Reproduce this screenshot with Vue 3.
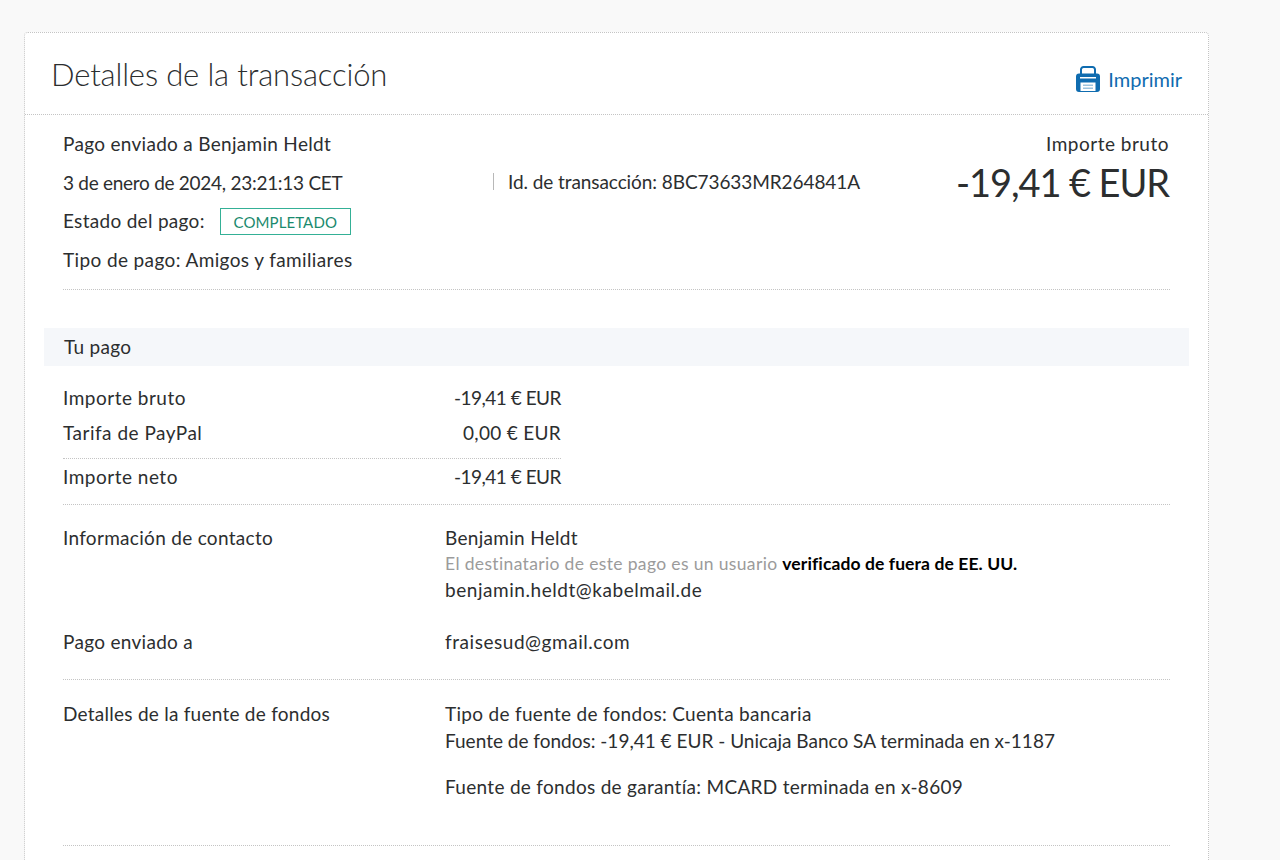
<template>
  <div class="page">
    <section class="card">
      <header class="card-head">
        <h1>Detalles de la transacción</h1>
        <a class="print-link">
          <svg width="24" height="26" viewBox="0 0 24 26" aria-hidden="true">
            <path d="M5 10V3.500A2.500 2.500 0 0 1 7.500 1h9A2.500 2.500 0 0 1 19 3.500V10" fill="none" stroke="#0f6cb0" stroke-width="2"/>
            <path d="M3 7.500h18a3 3 0 0 1 3 3V23a3 3 0 0 1-3 3H3a3 3 0 0 1-3-3V10.500a3 3 0 0 1 3-3z" fill="#0f6cb0"/>
            <rect x="4" y="11" width="16" height="1.500" fill="#fff"/>
            <rect x="4.500" y="16.500" width="15" height="8.500" fill="#fff"/>
            <rect x="7" y="18.500" width="10" height="1.500" fill="#9cc3de"/>
            <rect x="7" y="21.500" width="10" height="1.500" fill="#9cc3de"/>
          </svg>
          <span>Imprimir</span>
        </a>
      </header>

      <div class="card-body">
        <div class="summary">
          <div class="summary-left">
            <p>Pago enviado a Benjamin Heldt</p>
            <p class="digits">3 de enero de 2024, 23:21:13 CET</p>
            <p class="status-line">Estado del pago: <span class="badge">COMPLETADO</span></p>
            <p class="type-line">Tipo de pago: Amigos y familiares</p>
          </div>
          <div class="summary-id"><span>Id. de transacción: 8BC73633MR264841A</span></div>
          <div class="summary-right">
            <p class="wide">Importe bruto</p>
            <p class="big-amount">-19,41 € EUR</p>
          </div>
        </div>

        <div class="band">Tu pago</div>

        <div class="amounts">
          <div v-for="row in amountRows" :key="row.label" :class="['amount-row', { 'amount-total': row.total }]">
            <span class="wide">{{ row.label }}</span>
            <span :class="row.zero ? 'zero' : 'value'">{{ row.value }}</span>
          </div>
        </div>

        <div class="info contact">
          <div class="info-label">Información de contacto</div>
          <div>
            <p class="l26">Benjamin Heldt</p>
            <p class="note">El destinatario de este pago es un usuario <b>verificado de fuera de EE. UU.</b></p>
            <p class="l26 mail">benjamin.heldt@kabelmail.de</p>
            <p class="sent-to-gap"></p>
          </div>
          <div class="info-label">Pago enviado a</div>
          <div><p class="l26 mail">fraisesud@gmail.com</p></div>
        </div>

        <div class="info funding">
          <div class="info-label">Detalles de la fuente de fondos</div>
          <div>
            <p class="l28">Tipo de fuente de fondos: Cuenta bancaria</p>
            <p class="l28 digits2">Fuente de fondos: -19,41 € EUR - Unicaja Banco SA terminada en x-1187</p>
            <p class="l28 backup">Fuente de fondos de garantía: MCARD terminada en x-8609</p>
          </div>
        </div>
      </div>
    </section>
  </div>
</template>

<script setup>
const amountRows = [
  { label: 'Importe bruto', value: '-19,41 € EUR' },
  { label: 'Tarifa de PayPal', value: '0,00 € EUR', zero: true },
  { label: 'Importe neto', value: '-19,41 € EUR', total: true },
]
</script>

<style>
html, body {
  margin: 0;
  background: #f9f9f9;
  overflow: hidden;
}
</style>

<style scoped>
.page {
  height: 860px;
  padding: 32px 71px 0 24px;
  box-sizing: border-box;
  overflow: hidden;
  font-family: "Lato", "Noto Sans", sans-serif;
  font-size: 19px;
  letter-spacing: 0.3px;
  color: #2c2e2f;
}

p { margin: 0; }

.digits { letter-spacing: -0.28px; }
.digits2 { letter-spacing: 0; }
.value { letter-spacing: -0.5px; }
.wide { letter-spacing: 0.5px; }
.type-line { letter-spacing: 0.38px; }
.zero { letter-spacing: 0.3px; }
.mail { letter-spacing: 0.55px; }

.card {
  background: #fff;
  border: 1px dotted #c4c4c4;
  border-radius: 4px;
  min-height: 900px;
  box-sizing: border-box;
}

.card-head {
  height: 82px;
  box-sizing: border-box;
  padding: 0 26px 0 26px;
  border-bottom: 1px dotted #c4c4c4;
  display: flex;
  justify-content: space-between;
  align-items: center;
}

h1 {
  margin: 0;
  font-size: 31px;
  font-weight: 300;
  letter-spacing: -0.15px;
  color: #2c2e2f;
}

.print-link {
  display: flex;
  align-items: center;
  gap: 8px;
  margin-top: 11px;
  color: #0f6cb0;
  font-size: 20px;
  letter-spacing: 0;
}

.card-body { padding: 0 19px; }

.summary {
  margin: 0 19px;
  display: grid;
  grid-template-columns: 430px 1fr auto;
  padding: 10px 0 10px;
  border-bottom: 1px dotted #c4c4c4;
  height: 175px;
  box-sizing: border-box;
}

.summary-left p { height: 38.500px; line-height: 38.500px; }

.status-line { display: flex; align-items: center; }

.badge {
  margin-left: 15px;
  width: 131px;
  height: 27px;
  box-sizing: border-box;
  border: 1px solid #34b096;
  color: #1a8a6e;
  font-size: 15px;
  letter-spacing: 0.1px;
  line-height: 26px;
  text-align: center;
}

.summary-id {
  padding-top: 38px;
  line-height: 38.500px;
}

.summary-id span {
  display: inline-block;
  padding-left: 14px;
  line-height: 17px;
  letter-spacing: -0.08px;
  border-left: 1px solid #b8b8b8;
}

.summary-right {
  text-align: right;
  line-height: 38.500px;
  margin-right: 1px;
}

.big-amount {
  font-size: 38px;
  letter-spacing: -1.1px;
  line-height: 36px;
}

.band {
  margin-top: 38px;
  height: 38px;
  line-height: 38px;
  padding-left: 20px;
  background: #f5f7fa;
}

.amounts {
  margin: 15px 19px 0;
  border-bottom: 1px dotted #c4c4c4;
  padding-bottom: 9px;
}

.amount-row {
  width: 498px;
  height: 35px;
  line-height: 33px;
  display: flex;
  justify-content: space-between;
}

.amount-total {
  margin-top: 7px;
  border-top: 1px dotted #c4c4c4;
  height: 36px;
  line-height: 36px;
}

.info {
  margin: 0 19px;
  display: grid;
  grid-template-columns: 382px 1fr;
}

.contact {
  padding: 20px 0 24px;
  border-bottom: 1px dotted #c4c4c4;
}

.info-label { line-height: 26px; }

.l26 { line-height: 26px; }

.note {
  line-height: 26px;
  color: #9b9b9b;
  font-size: 17.500px;
  letter-spacing: 0.35px;
}

.note b { color: #000; letter-spacing: 0.1px; }

.sent-to-gap { height: 26px; }

.funding {
  padding: 20px 0 45px;
  border-bottom: 1px dotted #c4c4c4;
}

.l28 { line-height: 27px; }

.funding .info-label { line-height: 27px; letter-spacing: 0.25px; }

.backup { margin-top: 19px; }
</style>
